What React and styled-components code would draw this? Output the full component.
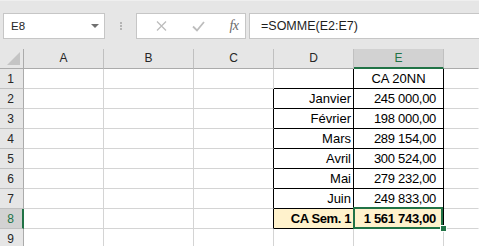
import React from 'react';
import styled, { createGlobalStyle, css } from 'styled-components';

const Global = createGlobalStyle`
  html, body { margin: 0; padding: 0; background: #ffffff; }
  body { font-family: "Liberation Sans", Arial, sans-serif; }
`;

const GREEN = '#217346';
const GRID = '#d4d4d4';
const HEAD_LINE = '#ababab';

const Window = styled.div`
  width: 479px;
  height: 246px;
  overflow: hidden;
  display: flex;
  flex-direction: column;
  background: #ffffff;
`;

const TopBar = styled.div`
  height: 49px;
  flex: none;
  box-sizing: border-box;
  background: #e6e6e6;
  border-top: 1px solid #efefef;
  display: flex;
  align-items: flex-start;
  padding: 12px 0 0 3px;
`;

const NameBox = styled.div`
  width: 102px;
  height: 26px;
  box-sizing: border-box;
  background: #fff;
  border: 1px solid #c6c6c6;
  display: flex;
  align-items: center;
  justify-content: space-between;
  padding: 0 5px 0 7px;
  font-size: 11.5px;
  color: #262626;
`;

const Caret = styled.span`
  width: 0;
  height: 0;
  border-left: 4px solid transparent;
  border-right: 4px solid transparent;
  border-top: 4px solid #707070;
`;

const Grip = styled.div`
  width: 31px;
  height: 26px;
  display: flex;
  flex-direction: column;
  align-items: center;
  justify-content: center;
  gap: 1px;
  & > i {
    display: block;
    width: 2px;
    height: 2px;
    background: #b4b4b4;
  }
`;

const FxBox = styled.div`
  width: 110px;
  height: 26px;
  box-sizing: border-box;
  background: #fff;
  border: 1px solid #c6c6c6;
  display: flex;
  align-items: center;
  padding-left: 12px;
`;

const IconSlot = styled.span`
  width: ${(p) => p.$w}px;
  display: flex;
  align-items: center;
  justify-content: center;
`;

const Fx = styled.span`
  font-family: "Liberation Serif", "Times New Roman", serif;
  font-style: italic;
  font-size: 14px;
  color: #6a6a6a;
  letter-spacing: -0.5px;
`;

const FormulaBox = styled.div`
  flex: 1;
  margin-left: 3px;
  margin-right: -4px;
  height: 26px;
  box-sizing: border-box;
  background: #fff;
  border: 1px solid #c6c6c6;
  display: flex;
  align-items: center;
  padding-left: 11px;
  font-size: 12.5px;
  color: #1e1e1e;
`;

const Sheet = styled.div`
  display: grid;
  grid-template-columns: 24px 80px 90px 80px 80px 90px 35px;
  grid-auto-rows: 20px;
`;

const HeadCell = styled.div`
  box-sizing: border-box;
  background: ${(p) => (p.$sel ? '#d2d2d2' : '#e6e6e6')};
  border-right: 1px solid ${(p) => (p.$open ? 'transparent' : '#c0c0c0')};
  border-bottom: ${(p) => (p.$sel ? `2px solid ${GREEN}` : `1px solid ${HEAD_LINE}`)};
  font-size: 12px;
  line-height: ${(p) => (p.$sel ? 18 : 19)}px;
  text-align: center;
  color: ${(p) => (p.$sel ? GREEN : '#262626')};
`;

const Corner = styled.div`
  box-sizing: border-box;
  background: #e6e6e6;
  border-right: 1px solid ${HEAD_LINE};
  border-bottom: 1px solid ${HEAD_LINE};
  display: flex;
  align-items: flex-end;
  justify-content: flex-end;
  padding: 0 3px 3px 0;
`;

const RowHead = styled.div`
  box-sizing: border-box;
  background: ${(p) => (p.$sel ? '#d2d2d2' : '#e6e6e6')};
  border-right: ${(p) => (p.$sel ? `2px solid ${GREEN}` : `1px solid ${HEAD_LINE}`)};
  border-bottom: 1px solid #c0c0c0;
  font-size: 12px;
  line-height: 20px;
  text-align: center;
  color: ${(p) => (p.$sel ? GREEN : '#262626')};
  padding-right: ${(p) => (p.$sel ? 1 : 2)}px;
`;

const Cell = styled.div`
  position: relative;
  box-sizing: border-box;
  border-right: 1px solid ${(p) => (p.$br ? '#000' : p.$open ? 'transparent' : GRID)};
  border-bottom: 1px solid ${(p) => (p.$bb ? '#000' : GRID)};
  background: ${(p) => (p.$fill ? '#fff2cc' : '#fff')};
  font-size: 13px;
  line-height: 20px;
  color: #000;
  white-space: nowrap;
  text-align: ${(p) => p.$align || 'left'};
  padding: 0 ${(p) => (p.$num ? 7 : 2)}px 0 2px;
  font-weight: ${(p) => (p.$bold ? 700 : 400)};
  letter-spacing: ${(p) => (p.$num ? '-0.3px' : p.$bold ? '-0.4px' : '0')};
  ${(p) =>
    p.$active &&
    css`
      &::after {
        content: '';
        position: absolute;
        top: -2px;
        left: -1px;
        right: 0;
        bottom: -1px;
        border: 2px solid ${GREEN};
        pointer-events: none;
      }
      &::before {
        content: '';
        position: absolute;
        right: -3px;
        bottom: -3px;
        width: 5px;
        height: 5px;
        background: ${GREEN};
        box-shadow: 0 0 0 1px #fff;
        z-index: 2;
      }
    `}
`;

const cols = ['A', 'B', 'C', 'D', 'E', 'F'];

const data = {
  1: { E: { v: 'CA 20NN', align: 'center' } },
  2: { D: 'Janvier', E: '245 000,00' },
  3: { D: 'Février', E: '198 000,00' },
  4: { D: 'Mars', E: '289 154,00' },
  5: { D: 'Avril', E: '300 524,00' },
  6: { D: 'Mai', E: '279 232,00' },
  7: { D: 'Juin', E: '249 833,00' },
  8: { D: 'CA Sem. 1', E: '1 561 743,00' },
};

const rows = [1, 2, 3, 4, 5, 6, 7, 8, 9];

function cellProps(r, c) {
  const inBox = r >= 1 && r <= 8;
  const br =
    (c === 'C' && r >= 2 && r <= 8) || ((c === 'D' || c === 'E') && inBox);
  const bb = (c === 'D' || c === 'E') && inBox;
  return { br, bb };
}

export default function App() {
  return (
    <>
      <Global />
      <Window>
        <TopBar>
          <NameBox>
            <span>E8</span>
            <Caret />
          </NameBox>
          <Grip>
            <i />
            <i />
            <i />
          </Grip>
          <FxBox>
            <IconSlot $w={24}>
              <svg width="11" height="10" viewBox="0 0 11 10">
                <path d="M1 0.5 L10 9.5 M10 0.5 L1 9.5" stroke="#bdbdbd" strokeWidth="1.3" fill="none" />
              </svg>
            </IconSlot>
            <IconSlot $w={50}>
              <svg width="13" height="11" viewBox="0 0 13 11">
                <path d="M1 5.5 L5 9.5 L12 1" stroke="#bdbdbd" strokeWidth="1.8" fill="none" />
              </svg>
            </IconSlot>
            <IconSlot $w={22}>
              <Fx>fx</Fx>
            </IconSlot>
          </FxBox>
          <FormulaBox>=SOMME(E2:E7)</FormulaBox>
        </TopBar>
        <Sheet>
          <Corner>
            <svg width="13" height="13" viewBox="0 0 13 13">
              <path d="M13 0 L13 13 L0 13 Z" fill="#c4c4c4" />
            </svg>
          </Corner>
          {cols.map((c) => (
            <HeadCell key={c} $sel={c === 'E'} $open={c === 'F'}>
              {c === 'F' ? '' : c}
            </HeadCell>
          ))}
          {rows.map((r) => (
            <React.Fragment key={r}>
              <RowHead $sel={r === 8}>{r}</RowHead>
              {cols.map((c) => {
                const raw = data[r] && data[r][c];
                const v = raw && typeof raw === 'object' ? raw.v : raw;
                const isNum = c === 'E' && r >= 2;
                const align =
                  raw && typeof raw === 'object'
                    ? raw.align
                    : c === 'D' || isNum
                    ? 'right'
                    : 'left';
                const { br, bb } = cellProps(r, c);
                return (
                  <Cell
                    key={c}
                    $br={br}
                    $bb={bb}
                    $open={c === 'F'}
                    $align={align}
                    $num={isNum}
                    $bold={r === 8 && (c === 'D' || c === 'E')}
                    $fill={r === 8 && (c === 'D' || c === 'E')}
                    $active={r === 8 && c === 'E'}
                  >
                    {v || ''}
                  </Cell>
                );
              })}
            </React.Fragment>
          ))}
        </Sheet>
      </Window>
    </>
  );
}
